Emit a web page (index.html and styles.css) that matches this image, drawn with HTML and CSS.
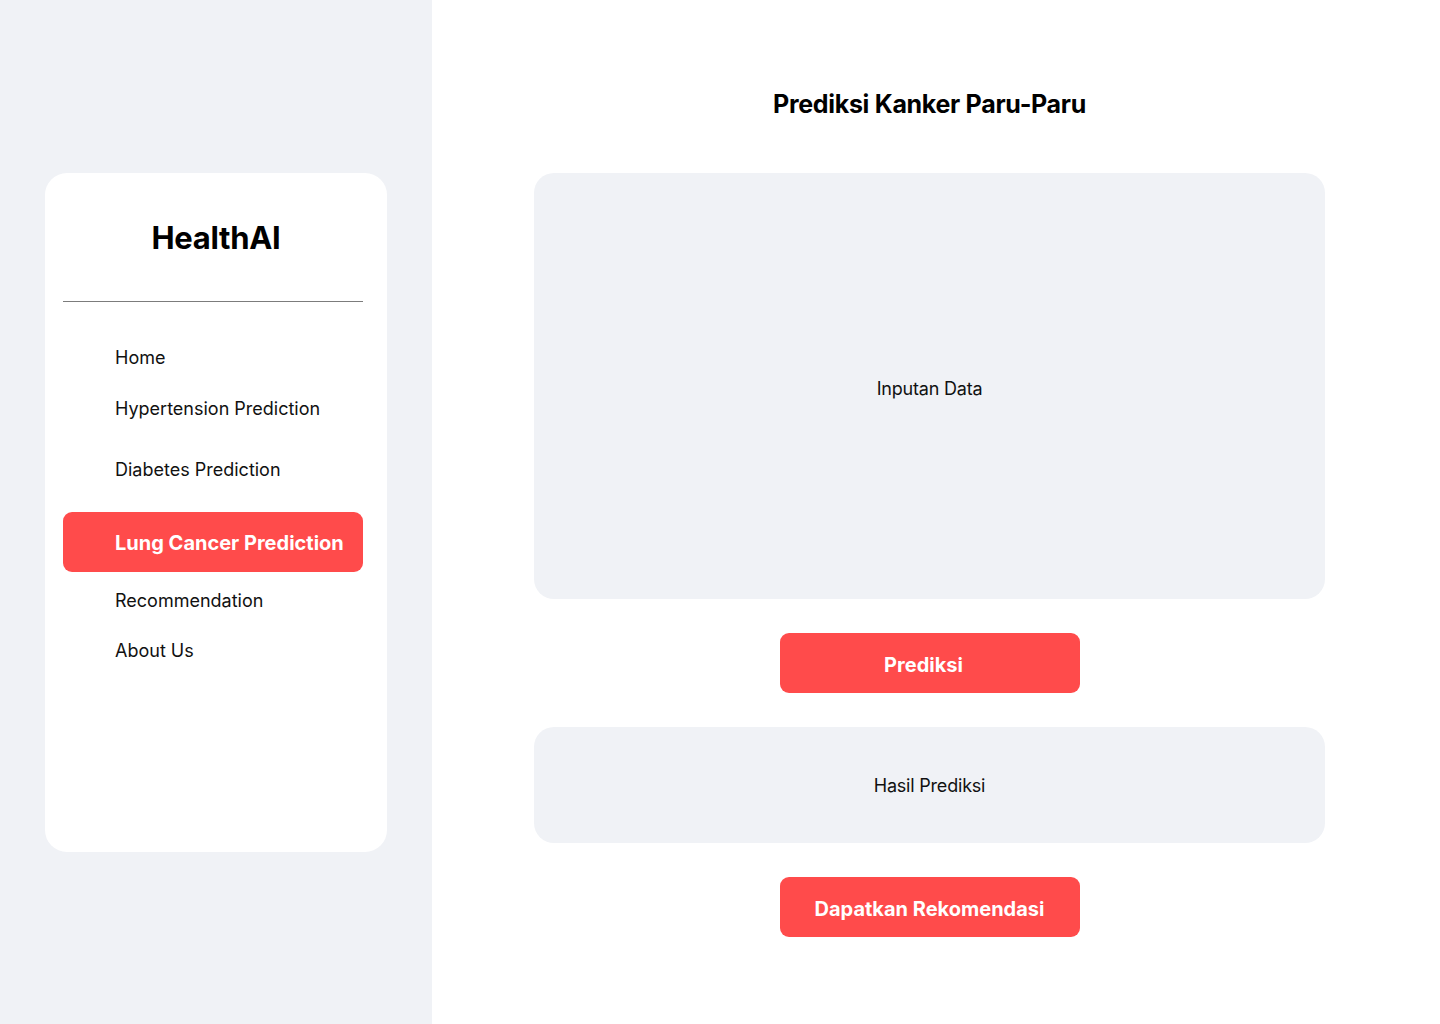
FILE: index.html
```html
<!DOCTYPE html>
<html lang="id">
<head>
<meta charset="utf-8">
<title>HealthAI - Prediksi Kanker Paru-Paru</title>
<link rel="stylesheet" href="styles.css">
</head>
<body>
<div class="page">
  <aside class="sidebar">
    <div class="card">
      <h1 class="brand">HealthAI</h1>
      <hr class="divider">
      <nav class="nav">
        <a class="nav-item nav-home">Home</a>
        <a class="nav-item nav-hyper">Hypertension Prediction</a>
        <a class="nav-item nav-diab">Diabetes Prediction</a>
        <a class="nav-item active">Lung Cancer Prediction</a>
        <a class="nav-item nav-rec">Recommendation</a>
        <a class="nav-item nav-about">About Us</a>
      </nav>
    </div>
  </aside>
  <main class="main">
    <h2 class="title">Prediksi Kanker Paru-Paru</h2>
    <section class="panel input-panel">Inputan Data</section>
    <button class="btn btn-predict">Prediksi</button>
    <section class="panel result-panel">Hasil Prediksi</section>
    <button class="btn btn-rec">Dapatkan Rekomendasi</button>
  </main>
</div>
</body>
</html>
```
FILE: styles.css
```css
* { box-sizing: border-box; }
html, body { margin: 0; padding: 0; }
body {
  font-family: Inter, "Liberation Sans", sans-serif;
  color: #111;
  background: #ffffff;
}
.page {
  display: flex;
  width: 1440px;
  height: 1024px;
}
.sidebar {
  width: 432px;
  flex: none;
  background: #f0f2f6;
  padding: 173px 45px 0 45px;
}
.card {
  background: #ffffff;
  border-radius: 22px;
  height: 679px;
  padding: 45px 24px 0 18px;
  display: flex;
  flex-direction: column;
}
.brand {
  margin: 0;
  text-align: center;
  font-size: 31px;
  font-weight: 700;
  line-height: 40px;
  color: #000;
  letter-spacing: -0.3px;
  padding-left: 6px;
}
.divider {
  border: none;
  border-top: 1.5px solid #7c7c7c;
  margin: 43px 0 0 0;
}
.nav {
  display: flex;
  flex-direction: column;
  margin-top: 43px;
}
.nav-item {
  display: block;
  font-size: 18px;
  line-height: 26px;
  color: #111;
  padding-left: 52px;
}
.nav-hyper { margin-top: 25px; }
.nav-diab { margin-top: 35px; }
.nav-item.active {
  margin-top: 29px;
  height: 60px;
  line-height: 58px;
  padding-top: 2px;
  background: #ff4b4b;
  color: #ffffff;
  font-weight: 700;
  font-size: 20px;
  border-radius: 9px;
}
.nav-rec { margin-top: 16px; }
.nav-about { margin-top: 24px; }
.main {
  flex: 1;
  display: flex;
  flex-direction: column;
  align-items: center;
  padding: 88px 115px 0 102px;
}
.title {
  margin: 0;
  font-size: 25px;
  line-height: 32px;
  font-weight: 700;
  color: #000;
  letter-spacing: -0.3px;
}
.panel {
  width: 791px;
  background: #f0f2f6;
  border-radius: 20px;
  display: flex;
  align-items: center;
  justify-content: center;
  font-size: 18px;
  color: #111;
  letter-spacing: -0.2px;
}
.input-panel {
  margin-top: 53px;
  height: 426px;
  padding-top: 4px;
}
.result-panel {
  margin-top: 34px;
  height: 116px;
}
.btn {
  width: 300px;
  height: 60px;
  border: none;
  border-radius: 9px;
  background: #ff4b4b;
  color: #ffffff;
  font-family: inherit;
  font-size: 20px;
  font-weight: 700;
  margin-top: 34px;
  padding-top: 4px;
}
.btn-predict { padding-right: 18px; }
```
